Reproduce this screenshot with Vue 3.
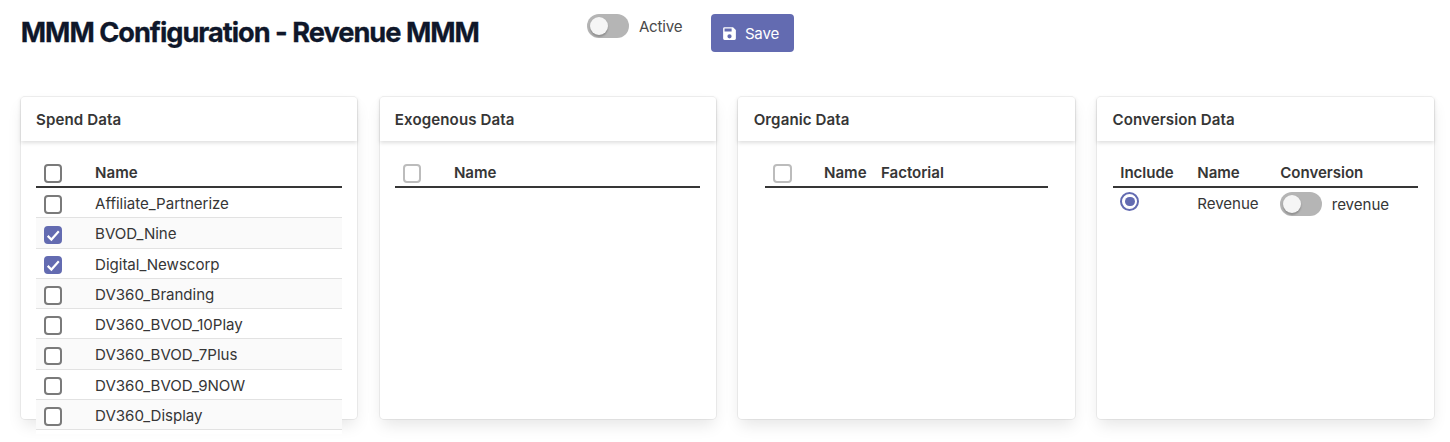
<script setup>
import { ref } from 'vue'

const active = ref(false)
const conversion = ref(false)
const include = ref('Revenue')
const allSpend = ref(false)
const spend = ref([
  { name: 'Affiliate_Partnerize', checked: false },
  { name: 'BVOD_Nine', checked: true },
  { name: 'Digital_Newscorp', checked: true },
  { name: 'DV360_Branding', checked: false },
  { name: 'DV360_BVOD_10Play', checked: false },
  { name: 'DV360_BVOD_7Plus', checked: false },
  { name: 'DV360_BVOD_9NOW', checked: false },
  { name: 'DV360_Display', checked: false }
])
</script>

<template>
  <main class="page">
    <header class="topbar">
      <h1>MMM Configuration - Revenue MMM</h1>
      <label class="switch active-switch">
        <input v-model="active" type="checkbox" />
        <span class="track"></span>
        <span class="switch-label">Active</span>
      </label>
      <button class="save" type="button">
        <svg viewBox="0 0 24 24" aria-hidden="true">
          <path d="M15 9H5V5h10m-3 14a3 3 0 0 1-3-3 3 3 0 0 1 3-3 3 3 0 0 1 3 3 3 3 0 0 1-3 3m5-16H5a2 2 0 0 0-2 2v14a2 2 0 0 0 2 2h14a2 2 0 0 0 2-2V7z" />
        </svg>
        <span>Save</span>
      </button>
    </header>

    <div class="cards">
      <section class="card">
        <h2>Spend Data</h2>
        <div class="content">
          <div class="table">
            <div class="row head">
              <input v-model="allSpend" class="check" type="checkbox" />
              <span class="text">Name</span>
            </div>
            <div v-for="item in spend" :key="item.name" class="row">
              <span class="cell-check">
                <input v-model="item.checked" class="check" type="checkbox" />
                <svg v-if="item.checked" class="tick" viewBox="0 0 18 18" aria-hidden="true">
                  <path d="M3.6 9.6 7.2 13.2 14.4 5.2" />
                </svg>
              </span>
              <span class="text">{{ item.name }}</span>
            </div>
          </div>
        </div>
      </section>

      <section class="card">
        <h2>Exogenous Data</h2>
        <div class="content">
          <div class="table">
            <div class="row head">
              <input class="check" type="checkbox" disabled />
              <span class="text">Name</span>
            </div>
          </div>
        </div>
      </section>

      <section class="card">
        <h2>Organic Data</h2>
        <div class="content inset">
          <div class="table">
            <div class="row head factorial">
              <input class="check" type="checkbox" disabled />
              <span class="text">Name</span>
              <span class="text">Factorial</span>
            </div>
          </div>
        </div>
      </section>

      <section class="card">
        <h2>Conversion Data</h2>
        <div class="content">
          <div class="table">
            <div class="row head conversion">
              <span class="text">Include</span>
              <span class="text">Name</span>
              <span class="text">Conversion</span>
            </div>
            <div class="row conversion plain">
              <input v-model="include" class="radio" type="radio" value="Revenue" />
              <span>Revenue</span>
              <label class="switch">
                <input v-model="conversion" type="checkbox" />
                <span class="track"></span>
                <span class="switch-label">revenue</span>
              </label>
            </div>
          </div>
        </div>
      </section>
    </div>
  </main>
</template>

<style>
html,
body {
  margin: 0;
  background: #fff;
  overflow: hidden;
}
</style>

<style scoped>
.page {
  box-sizing: border-box;
  height: 442px;
  padding: 0 16.5px 0 20.8px;
  font-family: Inter, "Liberation Sans", sans-serif;
  font-size: 15.1px;
  line-height: 22px;
  letter-spacing: -0.04px;
  color: #363636;
  background: #fff;
}
.topbar {
  display: flex;
  align-items: flex-start;
  height: 97px;
}
h1 {
  flex: 0 0 566.6px;
  margin: 14px 0 0;
  font-size: 27.2px;
  line-height: 38px;
  font-weight: 700;
  letter-spacing: -1.01px;
  color: #0f172a;
  -webkit-text-stroke: 0.3px #0f172a;
  white-space: nowrap;
}
.switch {
  display: flex;
  align-items: center;
}
.switch input {
  display: none;
}
.track {
  box-sizing: border-box;
  width: 41.5px;
  height: 24px;
  padding: 3px;
  border-radius: 12px;
  background: #b5b5b5;
}
.track::before {
  content: "";
  display: block;
  width: 18px;
  height: 18px;
  border-radius: 50%;
  background: #f5f5f5;
  box-shadow: 0 2px 1px rgba(0, 0, 0, 0.07), 0 2px 2px rgba(0, 0, 0, 0.1), 0 1px 3px rgba(0, 0, 0, 0.07);
}
input:checked + .track {
  background: #636bb1;
}
input:checked + .track::before {
  margin-left: 18px;
}
.switch-label {
  margin-left: 10px;
  padding-top: 1px;
}
.active-switch {
  width: 124px;
  margin-top: 14px;
  color: #4a4a4a;
  letter-spacing: -0.2px;
}
.save {
  display: flex;
  align-items: center;
  box-sizing: border-box;
  width: 82.5px;
  height: 37.5px;
  margin: 14px 0 0;
  padding: 1px 0 0 10px;
  border: 0;
  border-radius: 4px;
  background: #636bb1;
  color: #fff;
  font: inherit;
  letter-spacing: -0.2px;
}
.save span {
  padding-top: 1px;
}
.save svg {
  width: 17px;
  height: 17px;
  margin-right: 6.5px;
  fill: #fff;
}
.cards {
  display: grid;
  grid-template-columns: repeat(4, 1fr);
  gap: 22.6px;
}
.card {
  height: 322px;
  border-radius: 4px;
  background: #fff;
  box-shadow: 0 8px 16px -2px rgba(10, 10, 10, 0.1), 0 0 0 1px rgba(10, 10, 10, 0.06);
}
h2 {
  margin: 0;
  padding: 11px 15.2px 10px;
  height: 23px;
  line-height: 24px;
  font-size: 15.1px;
  font-weight: 600;
  letter-spacing: 0.1px;
  box-shadow: 0 2px 4px rgba(10, 10, 10, 0.13);
}
.content {
  padding: 16px 15.4px 0;
}
.content.inset {
  padding: 16px 27px 0;
}
.table {
  background: #fff;
  padding-bottom: 4px;
}
.row {
  display: grid;
  grid-template-columns: 51.3px 1fr;
  align-items: center;
  box-sizing: border-box;
  height: 30.25px;
  padding-top: 1px;
  padding-left: 7.6px;
  border-bottom: 1px solid #e2e2e2;
}
.row:nth-child(odd):not(.head) {
  background: #fafafa;
}
.row.head {
  height: 31px;
  border-bottom: 2px solid #363636;
  font-weight: 600;
}
.text {
  padding-top: 2px;
}
.row.factorial {
  grid-template-columns: 51px 57px 1fr;
}
.row.conversion {
  grid-template-columns: 77px 83px 1fr;
}
.row.plain {
  height: 32px;
  padding-top: 0;
  border-bottom: 0;
}
.cell-check {
  display: grid;
  justify-items: start;
  align-items: center;
}
.check {
  appearance: none;
  grid-area: auto;
  box-sizing: border-box;
  width: 18.5px;
  height: 18.5px;
  margin: 3px 0 0;
  border: 2px solid #7a7a7a;
  border-radius: 4px;
  background: #fff;
}
.cell-check .check {
  grid-area: 1 / 1;
}
.check:disabled {
  border-color: #bcbcbc;
}
.check:checked {
  border-color: #636bb1;
  background: #636bb1;
}
.tick {
  grid-area: 1 / 1;
  width: 18.5px;
  height: 18.5px;
  margin-top: 3px;
  fill: none;
  stroke: #fff;
  stroke-width: 2.1;
  pointer-events: none;
}
.radio {
  appearance: none;
  display: grid;
  place-items: center;
  box-sizing: border-box;
  width: 19px;
  height: 19px;
  margin: -5px 0 0;
  border: 2px solid #636bb1;
  border-radius: 50%;
}
.radio:checked::before {
  content: "";
  width: 9.5px;
  height: 9.5px;
  border-radius: 50%;
  background: #636bb1;
}
</style>
